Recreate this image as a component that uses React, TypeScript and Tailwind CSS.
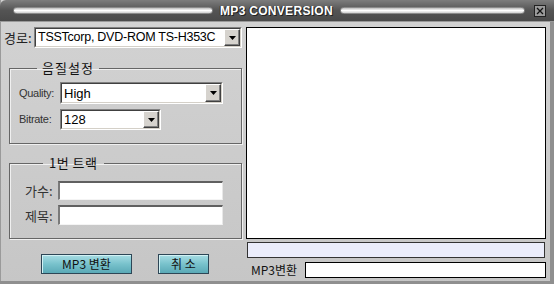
import React from "react";

const Arrow = () => (
  <div className="w-[16px] h-full flex items-center justify-center bg-[#d6d3ce] border-t border-l border-t-white border-l-white border-r border-b border-r-[#404040] border-b-[#404040] shadow-[inset_-1px_-1px_0_#808080]">
    <svg width="7" height="4" viewBox="0 0 7 4">
      <polygon points="0,0 7,0 3.5,4" fill="#000" />
    </svg>
  </div>
);

const Select = ({ w, h, text, size = "13px", track = "0px" }: { w: string; h: string; text: string; size?: string; track?: string }) => (
  <div className={`${w} ${h} flex bg-white border-t border-l border-t-[#808080] border-l-[#808080] border-r border-b border-r-white border-b-white`}>
    <div className="flex-1 min-w-0 flex items-stretch border-t border-l border-t-[#404040] border-l-[#404040] border-r border-b border-r-[#d4d0c8] border-b-[#d4d0c8]">
      <div className="flex-1 min-w-0 whitespace-nowrap flex items-center pl-[2px] text-black leading-none font-['Liberation_Sans',sans-serif]" style={{ fontSize: size, letterSpacing: track }}>{text}</div>
      <Arrow />
    </div>
  </div>
);

const Input = ({ w, h }: { w: string; h: string }) => (
  <div className={`${w} ${h} bg-white border-t-2 border-l-2 border-t-[#606060] border-l-[#7a7a7a] border-r border-b border-r-[#e8e8e8] border-b-[#f4f4f4]`} />
);

const Pill = ({ cls }: { cls: string }) => (
  <div className={`${cls} h-[7px] rounded-full bg-gradient-to-b from-[#bdbdbd] via-white to-[#cfcfcf] border border-[#8a8a8a]`} />
);

const Btn = ({ w, label }: { w: string; label: string }) => (
  <div className={`${w} h-[20px] flex items-center justify-center border border-[#2d4656] bg-gradient-to-b from-[#a7dde4] via-[#78c2cc] to-[#5aa9b6] shadow-[inset_1px_1px_0_#d2f1f4] text-[12px] text-[#111] font-['Noto_Sans_CJK_KR',sans-serif] leading-none`}>
    {label}
  </div>
);

export default function App() {
  return (
    <div className="w-[554px] h-[284px] relative overflow-hidden bg-gradient-to-b from-[#d3d3d3] to-[#c6c6c6] shadow-[inset_-4px_-3px_0_#8f8f8f,inset_1px_0_0_#9a9a9a] font-['Liberation_Sans','Noto_Sans_CJK_KR',sans-serif]">
      {/* title bar */}
      <div className="h-[22px] flex items-center pl-[13px] pr-[8px] bg-gradient-to-b from-[#7d7d7d] via-[#545454] to-[#4a4a4a] rounded-tl-[6px] border-b border-[#9a9a9a]">
        <Pill cls="w-[200px]" />
        <div className="w-[127px] text-center text-white font-bold text-[12px] leading-none tracking-[0.3px] [text-shadow:1px_1px_0_#222,-1px_0_0_#333]">
          MP3 CONVERSION
        </div>
        <Pill cls="flex-1" />
        <div className="ml-[9px] w-[12px] h-[12px] border border-[#222] bg-[#9a9a9a] flex items-center justify-center">
          <svg width="8" height="8" viewBox="0 0 8 8">
            <path d="M1 1L7 7M7 1L1 7" stroke="#111" strokeWidth="1.3" />
          </svg>
        </div>
      </div>

      <div className="flex">
        {/* left column */}
        <div className="w-[246px] flex flex-col pt-[5px]">
          <div className="flex items-center h-[21px]">
            <div className="w-[34px] pl-[4px] text-[13px] text-[#222] font-['Noto_Sans_CJK_KR',sans-serif] leading-none">경로:</div>
            <Select w="w-[208px]" h="h-[21px]" text="TSSTcorp, DVD-ROM TS-H353C" size="12.5px" track="-0.25px" />
          </div>

          <fieldset className="mt-[12px] ml-[9px] w-[233px] h-[84px] border border-[#666] shadow-[1px_1px_0_#f0f0f0,inset_1px_1px_0_#f0f0f0] pl-[9px]">
            <legend className="ml-[18px] px-[5px] h-[16px] text-[13px] tracking-[1px] text-[#111] font-['Noto_Sans_CJK_KR',sans-serif] leading-[16px]">음질설정</legend>
            <div className="flex items-center mt-[6px]">
              <div className="w-[41px] text-[11px] text-[#333] leading-none tracking-[-0.3px]">Quality:</div>
              <Select w="w-[163px]" h="h-[22px]" text="High" />
            </div>
            <div className="flex items-center mt-[5px]">
              <div className="w-[41px] text-[11px] text-[#333] leading-none tracking-[-0.3px]">Bitrate:</div>
              <Select w="w-[101px]" h="h-[21px]" text="128" />
            </div>
          </fieldset>

          <fieldset className="mt-[11px] ml-[9px] w-[233px] h-[84px] border border-[#666] shadow-[1px_1px_0_#f0f0f0,inset_1px_1px_0_#f0f0f0] pl-[15px]">
            <legend className="ml-[18px] px-[6px] h-[16px] text-[13px] tracking-[0.5px] text-[#111] font-['Noto_Sans_CJK_KR',sans-serif] leading-[16px]">1번 트랙</legend>
            <div className="flex items-center mt-[10px]">
              <div className="w-[33px] text-[13px] text-[#333] leading-none font-['Noto_Sans_CJK_KR',sans-serif]">가수:</div>
              <Input w="w-[165px]" h="h-[19px]" />
            </div>
            <div className="flex items-center mt-[5px]">
              <div className="w-[33px] text-[13px] text-[#333] leading-none font-['Noto_Sans_CJK_KR',sans-serif]">제목:</div>
              <Input w="w-[165px]" h="h-[20px]" />
            </div>
          </fieldset>

          <div className="flex mt-[15px] pl-[41px]">
            <Btn w="w-[91px]" label="MP3 변환" />
            <div className="w-[26px]" />
            <Btn w="w-[51px]" label="취 소" />
          </div>
        </div>

        {/* right column */}
        <div className="w-[300px] flex flex-col pt-[5px]">
          <div className="h-[212px] bg-white border border-black" />
          <div className="mt-[3px] h-[16px] bg-[#ebedfb] border border-[#333] mx-[1px]" />
          <div className="mt-[4px] flex items-center">
            <div className="w-[59px] pl-[5px] text-[12px] text-[#111] font-['Noto_Sans_CJK_KR',sans-serif] leading-none">MP3변환</div>
            <div className="flex-1 h-[16px] bg-white border border-black" />
          </div>
        </div>
      </div>
    </div>
  );
}
